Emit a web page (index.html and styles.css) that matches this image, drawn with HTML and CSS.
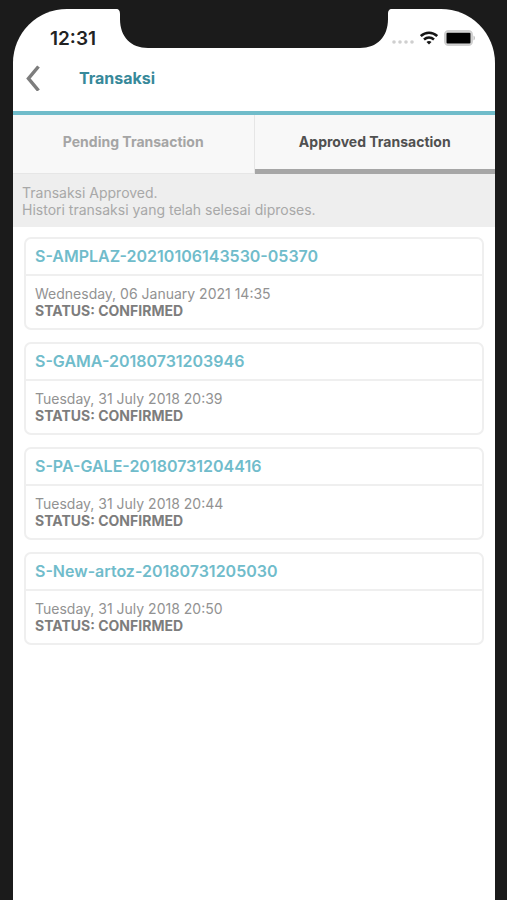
FILE: index.html
```html
<!DOCTYPE html>
<html lang="id">
<head>
<meta charset="utf-8">
<meta name="viewport" content="width=device-width, initial-scale=1">
<title>Transaksi</title>
<link rel="stylesheet" href="styles.css">
</head>
<body>
<div class="screen">
  <svg class="notch" viewBox="0 0 276 40" aria-hidden="true"><path d="M0 0C3 0 4 2 4 5V10C4 28 15 39 32 39H244C261 39 272 28 272 10V5C272 2 273 0 276 0Z" fill="#1b1b1b"/></svg>
  <div class="status-bar">
    <span class="time">12:31</span>
    <svg class="signal" viewBox="0 0 22 6" aria-hidden="true" fill="#cfcfcf"><circle cx="2" cy="3" r="1.800"/><circle cx="8" cy="3" r="1.800"/><circle cx="14" cy="3" r="1.800"/><circle cx="20" cy="3" r="1.800"/></svg>
    <svg class="wifi" viewBox="0 0 18 14" aria-hidden="true" fill="none" stroke="#161616" stroke-width="2.500"><path d="M.8 5C5.500 .7 12.500 .7 17.200 5"/><path d="M4 8.500C7 5.900 11 5.900 14 8.500"/><path d="M9 13.500L6.500 11C8 9.700 10 9.700 11.500 11Z" fill="#161616" stroke="none"/></svg>
    <svg class="battery" viewBox="0 0 32 16" aria-hidden="true"><rect x="1" y="1" width="27" height="14" rx="3.500" fill="#ddd" stroke="#cfcfcf" stroke-width="2"/><rect x="2.500" y="2.800" width="24" height="10.600" rx="1" fill="#000"/><path d="M29.500 5.500C31.500 6.500 31.500 9.500 29.500 10.500Z" fill="#c0c0c0"/></svg>
  </div>
  <header class="header">
    <button class="back" type="button" aria-label="Kembali"><svg viewBox="0 0 14 26" aria-hidden="true"><path d="M12.500 1.500L2.500 13.500L12.500 25.500" fill="none" stroke="#7d7d7d" stroke-width="3.500"/></svg></button>
    <h1 class="title">Transaksi</h1>
  </header>
  <nav class="tabs">
    <button class="tab" type="button">Pending Transaction</button>
    <button class="tab tab-active" type="button" aria-current="page">Approved Transaction</button>
  </nav>
  <p class="notice">Transaksi Approved.<br>Histori transaksi yang telah selesai diproses.</p>
  <main class="list">
    <article class="card">
      <h2 class="code">S-AMPLAZ-20210106143530-05370</h2>
      <div class="details"><p>Wednesday, 06 January 2021 14:35</p><p class="state">STATUS: CONFIRMED</p></div>
    </article>
    <article class="card">
      <h2 class="code">S-GAMA-20180731203946</h2>
      <div class="details"><p>Tuesday, 31 July 2018 20:39</p><p class="state">STATUS: CONFIRMED</p></div>
    </article>
    <article class="card">
      <h2 class="code">S-PA-GALE-20180731204416</h2>
      <div class="details"><p>Tuesday, 31 July 2018 20:44</p><p class="state">STATUS: CONFIRMED</p></div>
    </article>
    <article class="card">
      <h2 class="code">S-New-artoz-20180731205030</h2>
      <div class="details"><p>Tuesday, 31 July 2018 20:50</p><p class="state">STATUS: CONFIRMED</p></div>
    </article>
  </main>
</div>
</body>
</html>
```
FILE: styles.css
```css
* { box-sizing: border-box; margin: 0; }

body {
  min-height: 100vh;
  display: flex;
  padding: 9px 12px 0 13px;
  background: #1b1b1b;
  font: 14px/17px Inter, "Liberation Sans", sans-serif;
}

button {
  border: 0;
  padding: 0;
  background: none;
  font: inherit;
}

svg { display: block; }

.screen {
  position: relative;
  flex: 1;
  min-width: 0;
  background: #fff;
  border-radius: 54px 54px 0 0;
  overflow: hidden;
}

.notch {
  position: absolute;
  top: 0;
  left: 50%;
  width: 276px;
  height: 40px;
  transform: translateX(-50%);
}

.status-bar {
  display: flex;
  align-items: center;
  height: 42px;
  padding: 16px 19px 0 37px;
}

.time {
  flex: 1;
  color: #222;
  font-size: 19px;
  font-weight: 600;
}

.signal { width: 22px; height: 6px; margin: 8px 6px 0 0; }
.wifi { width: 18px; height: 14px; margin-right: 6px; }
.battery { width: 32px; height: 16px; }

.header {
  display: flex;
  align-items: center;
  height: 64px;
  padding: 0 13px 6px;
  border-bottom: 4px solid #70bcca;
}

.back svg { width: 14px; height: 26px; }

.title {
  margin-left: 39px;
  color: #37899a;
  font-size: 16px;
  font-weight: 700;
}

.tabs {
  display: flex;
  background: #f8f8f8;
}

.tab {
  flex: 1;
  height: 59px;
  padding-bottom: 6px;
  border-right: 1px solid #e6e6e6;
  border-bottom: 1px solid #e6e6e6;
  color: #a5a5a5;
  font-weight: 700;
}

.tab-active {
  padding-bottom: 2px;
  border-right: 0;
  border-bottom: 5px solid #a6a6a6;
  color: #505050;
}

.notice {
  padding: 10px 9px 9px;
  background: #eee;
  color: #a8a8a8;
}

.list {
  display: grid;
  gap: 12px;
  padding: 10px 11px;
}

.card {
  border: 2px solid #efefef;
  border-radius: 7px;
}

.code {
  padding: 9px;
  border-bottom: 2px solid #efefef;
  color: #70bccb;
  font-size: 16px;
  font-weight: 600;
  line-height: 17px;
}

.details {
  padding: 9px;
  color: #929292;
}

.state {
  color: #7d7d7d;
  font-weight: 700;
}
```
